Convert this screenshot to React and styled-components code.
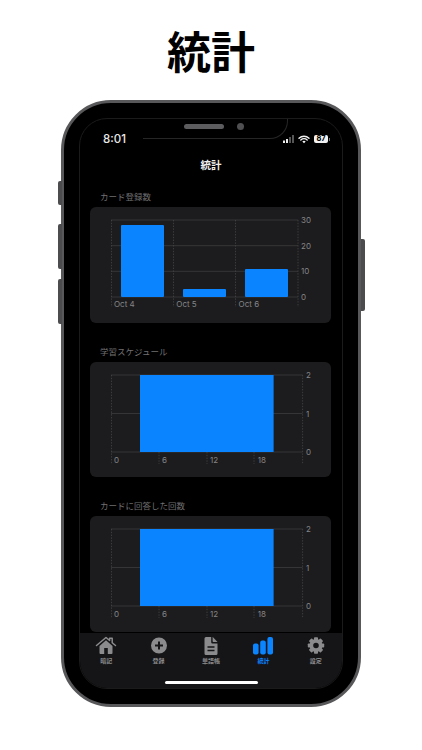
import React from "react";
import styled, { createGlobalStyle } from "styled-components";

const Global = createGlobalStyle`
  html, body { margin: 0; padding: 0; background: #fff; }
  body { width: 422px; height: 750px; overflow: hidden; font-family: Inter, "Noto Sans CJK JP", sans-serif; }
  * { box-sizing: border-box; }
`;

const JP = `"Noto Sans CJK JP", sans-serif`;
const BLUE = "#0a84ff";
const GREY = "#8b8b8d";

const Page = styled.main`
  width: 422px;
  height: 750px;
  display: flex;
  flex-direction: column;
  align-items: center;
  background: #fff;
`;
const Headline = styled.h1`
  margin: 0;
  height: 100px;
  display: flex;
  align-items: center;
  font: 700 44px/1 ${JP};
  color: #000;
`;
const Phone = styled.div`
  position: relative;
  width: 300px;
  height: 607px;
  padding: 15px;
  border: 3px solid #58585a;
  border-radius: 50px;
  background: #000;
`;
const SideButton = styled.span`
  position: absolute;
  width: 4px;
  top: ${p => p.$top}px;
  height: ${p => p.$h}px;
  ${p => (p.$right ? "right: -6.5px;" : "left: -6.5px;")}
  border-radius: ${p => (p.$right ? "0 2px 2px 0" : "2px 0 0 2px")};
  background: #4c4c4e;
`;
const Screen = styled.div`
  position: relative;
  width: 264px;
  height: 571px;
  display: flex;
  flex-direction: column;
  overflow: hidden;
  border: 1px solid #1b1b1c;
  border-radius: 28px;
  background: #000;
`;
const Notch = styled.div`
  position: absolute;
  top: -1px;
  left: 56px;
  width: 152px;
  height: 21px;
  display: flex;
  justify-content: center;
  align-items: center;
  gap: 13px;
  padding: 0 0 5px 4px;
  background: #000;
  &::after {
    content: "";
    position: absolute;
    left: 7px;
    right: 0;
    bottom: 0;
    height: 21px;
    border-right: 1px solid #262627;
    border-bottom: 1px solid #262627;
    border-bottom-right-radius: 18px;
  }
`;
const Speaker = styled.span`
  width: 40px;
  height: 5px;
  border-radius: 3px;
  background: #5c5c5e;
`;
const Camera = styled.span`
  width: 7px;
  height: 7px;
  border-radius: 50%;
  background: #4f4f51;
`;
const StatusBar = styled.div`
  height: 32px;
  flex: none;
  display: flex;
  align-items: flex-end;
  padding: 0 0 6px 23px;
`;
const Clock = styled.span`
  font: 500 11.5px/12px Inter, sans-serif;
  color: #e8e8e8;
`;
const StatusIcons = styled.div`
  position: absolute;
  top: 14px;
  right: 14px;
  display: flex;
  align-items: center;
  gap: 3px;
  height: 12px;
`;
const Battery = styled.span`
  position: relative;
  width: 14px;
  height: 8px;
  margin-left: 1px;
  border-radius: 2px;
  background: #f2f2f2;
  color: #000;
  font: 700 7.5px/8px Inter, sans-serif;
  text-align: center;
  &::after {
    content: "";
    position: absolute;
    right: -2px;
    top: 2.5px;
    width: 1px;
    height: 3px;
    background: #777;
  }
`;
const NavTitle = styled.div`
  height: 39px;
  flex: none;
  display: flex;
  justify-content: center;
  align-items: center;
  padding-bottom: 11px;
  font: 700 10.5px/1 ${JP};
  color: #efefef;
`;
const Sections = styled.div`
  flex: 1;
  display: flex;
  flex-direction: column;
  gap: 22px;
  padding: 0 10px;
`;
const Section = styled.section`
  display: flex;
  flex-direction: column;
`;
const SectionLabel = styled.div`
  height: 17px;
  padding-left: 10px;
  font: 400 8.5px/12px ${JP};
  color: #707072;
`;
const Card = styled.div`
  width: 241px;
  height: 115.5px;
  border-radius: 6px;
  background: #1c1c1e;
`;
const ChartSvg = styled.svg`
  display: block;
  text {
    font: 400 8px Inter, sans-serif;
    fill: #858587;
  }
`;
const TabBar = styled.nav`
  position: relative;
  height: 55px;
  flex: none;
  display: grid;
  grid-template-columns: repeat(5, 1fr);
  background: #151517;
  padding-top: 2px;
`;
const Tab = styled.div`
  display: flex;
  flex-direction: column;
  align-items: center;
  height: 34px;
  color: ${p => (p.$active ? BLUE : GREY)};
`;
const TabIcon = styled.svg`
  width: 22px;
  height: 21px;
  flex: none;
  display: block;
`;
const TabLabel = styled.span`
  margin-top: 1px;
  font: 700 6px/8px ${JP};
`;
const HomeIndicator = styled.span`
  position: absolute;
  left: 85px;
  bottom: 4px;
  width: 93px;
  height: 3px;
  border-radius: 2px;
  background: #fff;
`;

const GRID = "#3c3c3e";
const DASH = "#4a4a4c";

function BarChart() {
  const ys = [13, 38.7, 64.3, 90];
  const xs = [21.5, 83.5, 145.5, 208];
  const bars = [
    [31, 18],
    [93, 82],
    [155, 62],
  ];
  return (
    <ChartSvg width="241" height="115.5" viewBox="0 0 241 115.5">
      {ys.map(y => <line key={y} x1="21" x2="208" y1={y} y2={y} stroke={GRID} strokeWidth="0.8" />)}
      {xs.map(x => <line key={x} x1={x} x2={x} y1="13" y2="100" stroke={DASH} strokeWidth="0.7" strokeDasharray="1.4 1.4" />)}
      {bars.map(([x, y]) => <rect key={x} x={x} y={y} width="43" height={90 - y} rx="1" fill={BLUE} />)}
      {["30", "20", "10", "0"].map((t, i) => <text key={t} x="211" y={ys[i] + 3}>{t}</text>)}
      {["Oct 4", "Oct 5", "Oct 6"].map((t, i) => <text key={t} x={24 + i * 62.3} y="100">{t}</text>)}
    </ChartSvg>
  );
}

function HourChart() {
  const ys = [13, 51.5, 90];
  return (
    <ChartSvg width="241" height="115.5" viewBox="0 0 241 115.5">
      {ys.map(y => <line key={y} x1="21" x2="212.6" y1={y} y2={y} stroke={GRID} strokeWidth="0.8" />)}
      {[21.5, 212.6].map(x => <line key={x} x1={x} x2={x} y1="13" y2="102" stroke={DASH} strokeWidth="0.7" strokeDasharray="1.4 1.4" />)}
      {[69, 117, 164].map(x => <line key={x} x1={x} x2={x} y1="90" y2="102" stroke={DASH} strokeWidth="0.7" strokeDasharray="1.4 1.4" />)}
      <rect x="50" y="13" width="133.6" height="77" fill={BLUE} />
      {["2", "1", "0"].map((t, i) => <text key={t} x="216" y={ys[i] + 3}>{t}</text>)}
      {[["0", 24], ["6", 72], ["12", 120], ["18", 167.7]].map(([t, x]) => <text key={t} x={x} y="101">{t}</text>)}
    </ChartSvg>
  );
}

const HomeGlyph = () => (
  <TabIcon viewBox="0 0 22 21">
    <path d="M1.5 10.5 11 2.5l3.6 3V3.2h2.6v4.5l3.3 2.8" fill="none" stroke="currentColor" strokeWidth="1.5" strokeLinejoin="round" strokeLinecap="round" />
    <path fillRule="evenodd" d="M4.5 11 11 5.3l6.5 5.7v7a1 1 0 0 1-1 1h-11a1 1 0 0 1-1-1zM9.2 13v6h3.6v-6z" fill="currentColor" />
  </TabIcon>
);
const PlusGlyph = () => (
  <TabIcon viewBox="0 0 22 21">
    <path fillRule="evenodd" d="M11 2.5a8 8 0 1 1 0 16 8 8 0 0 1 0-16zM10 6.5v3h-3v2h3v3h2v-3h3v-2h-3v-3z" fill="currentColor" />
  </TabIcon>
);
const DocGlyph = () => (
  <TabIcon viewBox="0 0 22 21">
    <path fillRule="evenodd" d="M6 2h5.2v5.2a1.3 1.3 0 0 0 1.3 1.3H17.500v10a1.500 1.500 0 0 1-1.500 1.500H6a1.500 1.500 0 0 1-1.500-1.500V3.500A1.500 1.500 0 0 1 6 2zM7.500 11.300v1.400h7v-1.400zM7.500 14.800v1.400h7v-1.400z" fill="currentColor" />
    <path d="M12.600 1.800v4.500a.8.8 0 0 0 .8.8h4.100z" fill="currentColor" />
  </TabIcon>
);
const BarsGlyph = () => (
  <TabIcon viewBox="0 0 22 21">
    <rect x="1" y="8.500" width="5.600" height="11" rx="2" fill="currentColor" />
    <rect x="8.200" y="5.500" width="5.600" height="14" rx="2" fill="currentColor" />
    <rect x="15.400" y="2" width="5.600" height="17.500" rx="2" fill="currentColor" />
  </TabIcon>
);
const GearGlyph = () => {
  const teeth = [0, 45, 90, 135, 180, 225, 270, 315];
  return (
    <TabIcon viewBox="0 0 22 21">
      {teeth.map(a => (
        <rect key={a} x="9" y="2.300" width="4" height="4" rx="0.800" fill="currentColor" transform={`rotate(${a} 11 10.500)`} />
      ))}
      <circle cx="11" cy="10.500" r="4.600" fill="none" stroke="currentColor" strokeWidth="3.600" />
    </TabIcon>
  );
};

const tabs = [
  { label: "暗記", Glyph: HomeGlyph },
  { label: "登録", Glyph: PlusGlyph },
  { label: "単語帳", Glyph: DocGlyph },
  { label: "統計", Glyph: BarsGlyph, active: true },
  { label: "設定", Glyph: GearGlyph },
];

export default function App() {
  return (
    <Page>
      <Global />
      <Headline>統計</Headline>
      <Phone>
        <SideButton $top={78} $h={24} />
        <SideButton $top={121} $h={45} />
        <SideButton $top={176} $h={45} />
        <SideButton $right $top={136} $h={72} />
        <Screen>
          <StatusBar>
            <Clock>8:01</Clock>
          </StatusBar>
          <Notch>
            <Speaker />
            <Camera />
          </Notch>
          <StatusIcons>
            <svg width="12" height="8" viewBox="0 0 12 8">
              <rect x="0" y="5.500" width="2" height="2.500" fill="#eee" />
              <rect x="3" y="4" width="2" height="4" fill="#eee" />
              <rect x="6" y="2" width="2" height="6" fill="#555" />
              <rect x="9" y="0" width="2" height="8" fill="#555" />
            </svg>
            <svg width="12" height="9" viewBox="0 0 12 9">
              <path d="M1 3.200a7.200 7.200 0 0 1 10 0M2.800 5a4.700 4.700 0 0 1 6.400 0" fill="none" stroke="#f2f2f2" strokeWidth="1.400" strokeLinecap="round" />
              <path d="M4.300 6.500a2.500 2.500 0 0 1 3.400 0L6 8.300z" fill="#f2f2f2" />
            </svg>
            <Battery>87</Battery>
          </StatusIcons>
          <NavTitle>統計</NavTitle>
          <Sections>
            <Section>
              <SectionLabel>カード登録数</SectionLabel>
              <Card><BarChart /></Card>
            </Section>
            <Section>
              <SectionLabel>学習スケジュール</SectionLabel>
              <Card><HourChart /></Card>
            </Section>
            <Section>
              <SectionLabel>カードに回答した回数</SectionLabel>
              <Card><HourChart /></Card>
            </Section>
          </Sections>
          <TabBar>
            {tabs.map(({ label, Glyph, active }) => (
              <Tab key={label} $active={active}>
                <Glyph />
                <TabLabel>{label}</TabLabel>
              </Tab>
            ))}
            <HomeIndicator />
          </TabBar>
        </Screen>
      </Phone>
    </Page>
  );
}
